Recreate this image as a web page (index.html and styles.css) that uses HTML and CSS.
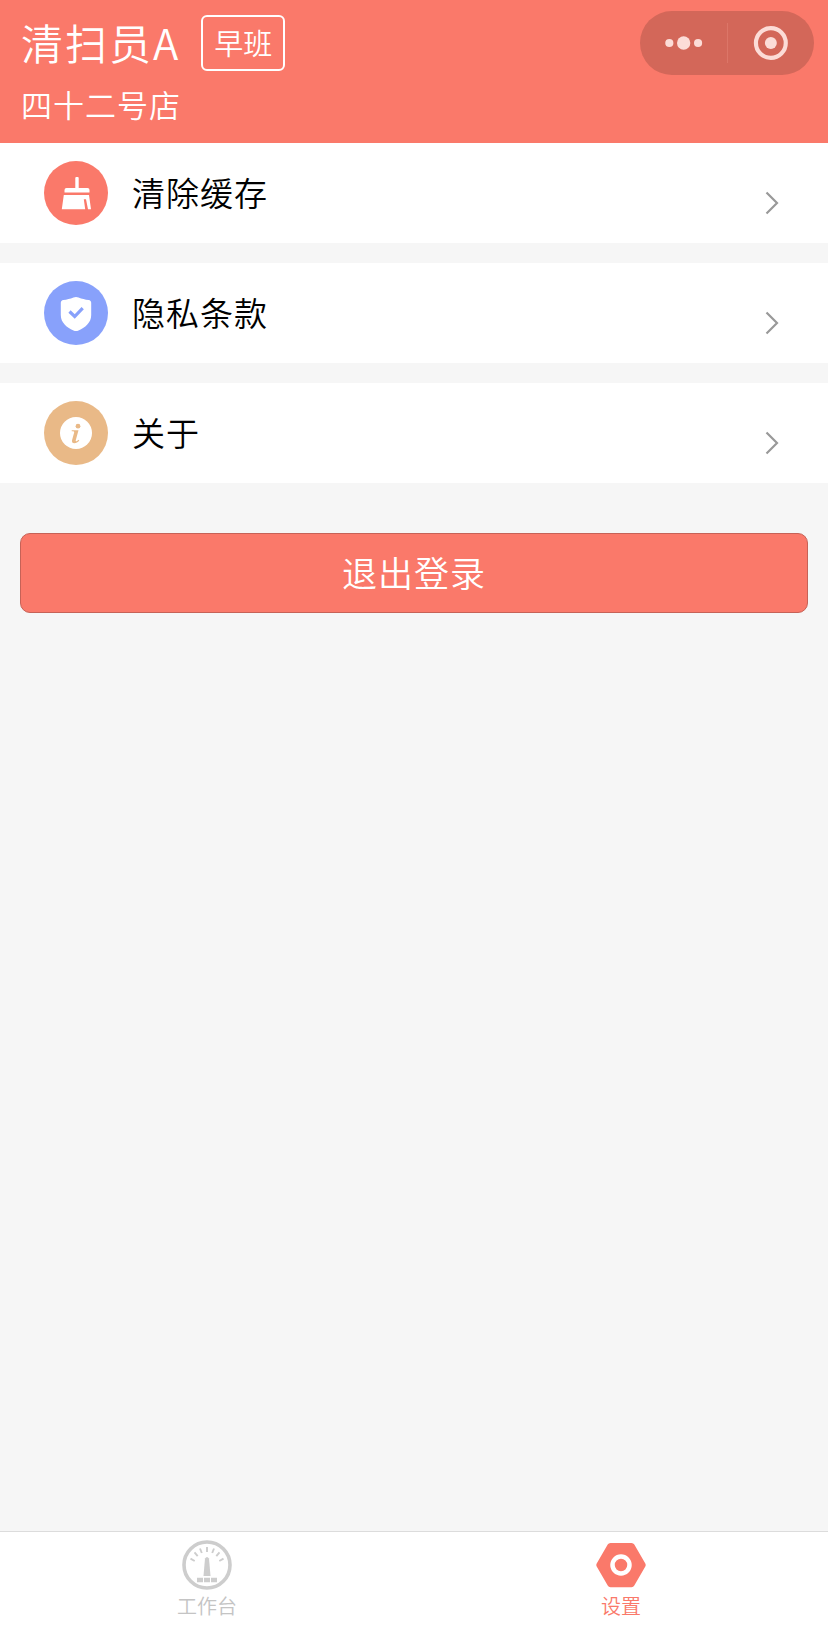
FILE: index.html
```
<!DOCTYPE html>
<html lang="zh-CN">
<head>
  <meta charset="UTF-8">
  <meta name="viewport" content="width=device-width, initial-scale=1.0">
  <title>设置</title>
  <link rel="stylesheet" href="styles.css">
</head>
<body>
  <header class="header">
    <div class="user">
      <div class="user-row">
        <span class="user-name">清扫员A</span>
        <span class="shift">早班</span>
      </div>
      <div class="store">四十二号店</div>
    </div>
    <div class="capsule">
      <svg class="capsule-btn" viewBox="0 0 87 64" fill="#fcdcd7">
        <circle cx="29.5" cy="32" r="4.1"/>
        <circle cx="43.9" cy="32" r="6.7"/>
        <circle cx="58.4" cy="32" r="4.1"/>
      </svg>
      <span class="capsule-line"></span>
      <svg class="capsule-btn" viewBox="0 0 87 64">
        <circle cx="43.1" cy="32" r="15" fill="none" stroke="#fcdcd7" stroke-width="4.2"/>
        <circle cx="43.1" cy="32" r="6" fill="#fcdcd7"/>
      </svg>
    </div>
  </header>

  <main class="content">
    <a class="item">
      <svg class="item-icon" viewBox="0 0 64 64">
        <circle cx="32" cy="32" r="32" fill="#fa796a"/>
        <g fill="#fff">
          <path d="M32.300 16h1.400a1 1 0 0 1 1 1v10h8.800a2 2 0 0 1 2 2v2.400h-25V29a2 2 0 0 1 2-2h8.800V17a1 1 0 0 1 1-1z"/>
          <path d="M19.800 34h25.200L47 48.300h-3l-2-10h-2.200l1.400 10H17.800z"/>
        </g>
      </svg>
      <span class="item-text">清除缓存</span>
      <svg class="arrow" viewBox="0 0 14 24"><path d="M1.500 1.500 12 12 1.500 22.500"/></svg>
    </a>
    <a class="item">
      <svg class="item-icon" viewBox="0 0 64 64">
        <circle cx="32" cy="32" r="32" fill="#88a1fb"/>
        <path d="M29.500 16.500q2.500-1 5 0c3.500 1.400 6.500 2 10.200 2.600 1.500.3 2.500 1.200 2.500 2.700V34c0 7.500-5.500 12.300-12.700 15.400q-2.500 1-5 0C22.300 46.300 16.800 41.500 16.800 34V21.800c0-1.500 1-2.400 2.500-2.700 3.700-.6 6.700-1.200 10.200-2.600z" fill="#fff"/>
        <path d="m25.500 30.500 5.200 5 8-8.300" fill="none" stroke="#88a1fb" stroke-width="3.200"/>
      </svg>
      <span class="item-text">隐私条款</span>
      <svg class="arrow" viewBox="0 0 14 24"><path d="M1.500 1.500 12 12 1.500 22.500"/></svg>
    </a>
    <a class="item">
      <svg class="item-icon" viewBox="0 0 64 64">
        <circle cx="32" cy="32" r="32" fill="#e9b987"/>
        <circle cx="32" cy="32" r="16" fill="#fff"/>
        <circle cx="34" cy="25.200" r="2.400" fill="#e9b987"/>
        <path d="M27.700 30.300v-1h6.800l-2.800 10.200c-.2.900.6 1 1.300.5l1.600-1.300.7.800c-1.500 1.700-3.200 2.700-4.900 2.700-2 0-2.800-1.300-2.300-3.300l2-7.200c.3-1-.1-1.400-2.400-1.400z" fill="#e9b987"/>
      </svg>
      <span class="item-text">关于</span>
      <svg class="arrow" viewBox="0 0 14 24"><path d="M1.500 1.500 12 12 1.500 22.500"/></svg>
    </a>

    <button class="logout">退出登录</button>
  </main>

  <nav class="tabbar">
    <a class="tab">
      <svg class="tab-icon" viewBox="0 0 50 50">
        <circle cx="25" cy="25" r="23" fill="none" stroke="#cdcdcd" stroke-width="3.600"/>
        <path d="M8.500 18.700l4.200 2.300M12.500 12.300l3.200 3.800M18 8.500l1.800 4.500M25 7v5M32 8.500l-1.800 4.500M37.500 12.300l-3.200 3.800M41.500 18.700l-4.200 2.300" fill="none" stroke="#cdcdcd" stroke-width="1.900"/>
        <path d="M23 18.500q2-3 4 0l1.500 17.500h-7z" fill="#cdcdcd"/>
        <path d="M15 37.700h6v4.500h-6zM22 37.700h6v4.500h-6zM29 37.700h6v4.500h-6z" fill="#cdcdcd"/>
      </svg>
      <span>工作台</span>
    </a>
    <a class="tab active">
      <svg class="tab-icon" viewBox="0 0 50 50">
        <path d="M14.500 3h21q1.900 0 2.800 1.600l11 18.900q.8 1.500 0 3l-11 19q-.9 1.700-2.800 1.700h-21q-1.900 0-2.800-1.700l-11-19q-.8-1.500 0-3l11-18.900q.9-1.600 2.800-1.600z" fill="#fa796a"/>
        <circle cx="25" cy="25" r="8.500" fill="none" stroke="#fff" stroke-width="4.500"/>
      </svg>
      <span>设置</span>
    </a>
  </nav>
</body>
</html>
```
FILE: styles.css
```
* {
  box-sizing: border-box;
}

body {
  margin: 0;
  height: 100vh;
  display: flex;
  flex-direction: column;
  background: #f6f6f6;
  font-family: "Noto Sans CJK SC", sans-serif;
}

.header {
  display: flex;
  justify-content: space-between;
  align-items: flex-start;
  height: 143px;
  padding: 11px 14px 0 21px;
  background: #fa796a;
  color: #fff;
}

.user-row {
  display: flex;
  align-items: center;
  gap: 21px;
  padding-top: 4px;
}

.user-name {
  font-size: 42px;
  font-weight: 350;
  line-height: 54px;
  height: 56px;
  letter-spacing: 2px;
}

.shift {
  width: 84px;
  height: 56px;
  border: 2px solid #fff;
  border-radius: 6px;
  font-size: 29px;
  font-weight: 350;
  line-height: 50px;
  text-align: center;
}

.store {
  margin-top: 13px;
  font-size: 31px;
  font-weight: 350;
  line-height: 40px;
  letter-spacing: 1px;
}

.capsule {
  display: flex;
  align-items: center;
  width: 174px;
  height: 64px;
  border-radius: 32px;
  background: #d36759;
}

.capsule-btn {
  flex: 1;
  height: 64px;
}

.capsule-line {
  width: 1px;
  height: 40px;
  background: #dc7668;
}

.content {
  flex: 1;
}

.item {
  display: flex;
  align-items: center;
  height: 100px;
  margin-bottom: 20px;
  padding: 0 49px 0 44px;
  background: #fff;
}

.item-icon {
  width: 64px;
  height: 64px;
}

.item-text {
  flex: 1;
  margin-left: 24px;
  padding-bottom: 3px;
  font-size: 33px;
  font-weight: 350;
  color: #000;
  letter-spacing: 1px;
}

.arrow {
  width: 14px;
  height: 24px;
  margin-top: 20px;
  fill: none;
  stroke: #999;
  stroke-width: 2.200;
}

.logout {
  display: block;
  width: 788px;
  height: 80px;
  margin: 50px auto 0;
  padding: 0 0 4px;
  border: 1px solid #c66257;
  border-radius: 10px;
  background: #fa796a;
  color: #fff;
  font-family: inherit;
  font-size: 35px;
  font-weight: 350;
  letter-spacing: 1px;
}

.tabbar {
  display: flex;
  height: 108px;
  border-top: 1px solid #dcdcdc;
  background: #fff;
}

.tab {
  flex: 1;
  display: flex;
  flex-direction: column;
  align-items: center;
  padding-top: 8px;
  font-size: 20px;
  font-weight: 350;
  line-height: 30px;
  color: #c4c4c4;
}

.tab-icon {
  width: 50px;
  height: 50px;
  margin-bottom: 1px;
}

.active {
  color: #fa796a;
}
```
